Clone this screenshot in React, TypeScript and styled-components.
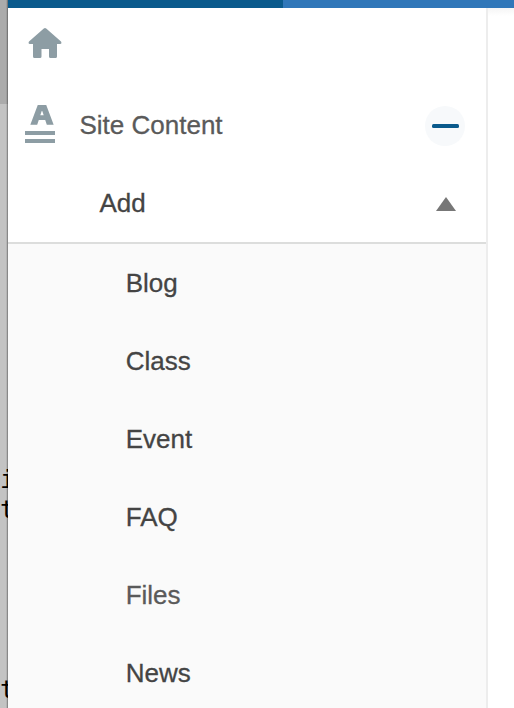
import React from "react";
import styled, { createGlobalStyle } from "styled-components";

const GlobalStyle = createGlobalStyle`
  * { box-sizing: border-box; }
  body { margin: 0; overflow: hidden; background: #fff; }
`;

const Window = styled.div`
  display: flex;
  width: 514px;
  height: 708px;
  overflow: hidden;
  font-family: "Liberation Sans", Arial, sans-serif;
  font-size: 26px;
`;

const Gutter = styled.pre`
  flex: none;
  width: 8px;
  height: 708px;
  margin: 0;
  padding-top: 465px;
  overflow: hidden;
  background:
    linear-gradient(90deg, transparent 6px, rgba(0, 0, 0, 0.08) 6px, rgba(0, 0, 0, 0.08) 7px, rgba(0, 0, 0, 0.3) 7px),
    linear-gradient(#ababab 104px, #c3c3c3 104px);
  color: #000;
  font: 25px/30px "DejaVu Sans Mono", monospace;
`;

const CodeLine = styled.span`
  display: block;
  height: 30px;
`;

const Main = styled.div`
  flex: 1;
  display: flex;
  flex-direction: column;
  min-width: 0;
`;

const TopBar = styled.header`
  flex: none;
  display: flex;
  height: 8px;
  background: #3077b9;
`;

const BrandSegment = styled.div`
  width: 275px;
  background: #0a5a8c;
`;

const Body = styled.div`
  flex: 1;
  display: flex;
  min-height: 0;
`;

const Sidebar = styled.nav`
  width: 480px;
  border-right: 2px solid #ededed;
  -webkit-text-stroke: 0.3px currentColor;
`;

const Content = styled.main`
  flex: 1;
  background: linear-gradient(#f5f5f5, #fff 8px);
`;

const Row = styled.div<{ $indent: number; $color?: string }>`
  display: flex;
  align-items: center;
  height: 78px;
  padding-left: ${(p) => p.$indent}px;
  line-height: 78px;
  color: ${(p) => p.$color ?? "#444"};
`;

const AddRow = styled(Row)`
  height: 80px;
  border-bottom: 2px solid #dcdddc;
`;

const Label = styled.span`
  flex: 1;
`;

const HomeIcon = styled.svg`
  width: 36px;
  height: 34px;
  margin-bottom: 6px;
  filter: blur(0.4px);
`;

const ContentIcon = styled.svg`
  width: 32px;
  height: 40px;
  margin: 0 22.5px 0 0;
  filter: blur(0.4px);
`;

const CollapseButton = styled.button`
  display: grid;
  place-items: center;
  width: 40px;
  height: 40px;
  margin: 2px 21px 0 0;
  padding: 0;
  border: 0;
  border-radius: 50%;
  background: #f7f9fb;
`;

const Minus = styled.span`
  width: 27px;
  height: 4px;
  border-radius: 1.5px;
  background: #0a5a8c;
  filter: blur(0.6px);
`;

const Arrow = styled.svg`
  width: 20px;
  height: 14px;
  margin: 2px 30px 0 0;
`;

const SubMenu = styled.div`
  height: 468px;
  background: #fafafa;
`;

const items = [
  { label: "Blog" },
  { label: "Class" },
  { label: "Event" },
  { label: "FAQ" },
  { label: "Files", color: "#5a5a5a" },
  { label: "News" },
];

const codeLines = ["i", "t", "", "", "", "", "", "t"];

export default function App() {
  return (
    <Window>
      <GlobalStyle />
      <Gutter>
        {codeLines.map((line, i) => (
          <CodeLine key={i}>{line}</CodeLine>
        ))}
      </Gutter>
      <Main>
        <TopBar>
          <BrandSegment />
        </TopBar>
        <Body>
          <Sidebar>
            <Row $indent={19}>
              <HomeIcon viewBox="0 0 36 34" fill="#8d9da4">
                <path d="M16.8 1.4Q18 .4 19.2 1.4L34 14.6Q35.2 16.8 33 17H30V29.5Q30 31 28.5 31H23.5Q22 31 22 29.5V22H14.5V29.5Q14.5 31 13 31H7.5Q6 31 6 29.5V17H3Q.8 16.8 2 14.6Z" />
              </HomeIcon>
            </Row>
            <Row $indent={17} $color="#5a5a5a">
              <ContentIcon viewBox="0 0 32 40" fill="#8d9da4">
                <text
                  x="6.5"
                  y="19.3"
                  fontFamily="Liberation Mono"
                  fontWeight="700"
                  fontSize="29"
                  textLength="21"
                  lengthAdjust="spacingAndGlyphs"
                  stroke="#8d9da4"
                  strokeWidth="1.4"
                >
                  A
                </text>
                <rect x="0" y="26" width="30" height="4" />
                <rect x="0" y="34" width="30" height="4" />
              </ContentIcon>
              <Label>Site Content</Label>
              <CollapseButton aria-label="Collapse Site Content">
                <Minus />
              </CollapseButton>
            </Row>
            <AddRow $indent={91.5}>
              <Label>Add</Label>
              <Arrow viewBox="0 0 20 14">
                <path d="M10 0 20 14H0Z" fill="#777" />
              </Arrow>
            </AddRow>
            <SubMenu>
              {items.map((item) => (
                <Row key={item.label} $indent={117.7} $color={item.color}>
                  {item.label}
                </Row>
              ))}
            </SubMenu>
          </Sidebar>
          <Content />
        </Body>
      </Main>
    </Window>
  );
}
